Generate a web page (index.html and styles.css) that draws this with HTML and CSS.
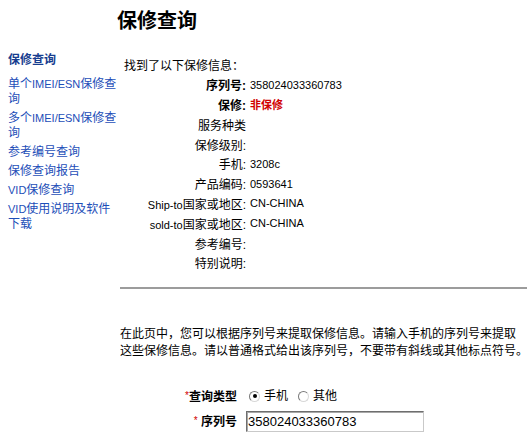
FILE: index.html
```html
<!DOCTYPE html>
<html lang="zh-CN">
<head>
<meta charset="utf-8">
<title>保修查询</title>
<link rel="stylesheet" href="styles.css">
</head>
<body>
<div class="page">
  <nav class="nav">
    <div class="nav-title">保修查询</div>
    <ul class="nav-list">
      <li><a href="#">单个<span class="en">IMEI/ESN</span>保修查询</a></li>
      <li><a href="#">多个<span class="en">IMEI/ESN</span>保修查询</a></li>
      <li><a href="#">参考编号查询</a></li>
      <li><a href="#">保修查询报告</a></li>
      <li><a href="#"><span class="en">VID</span>保修查询</a></li>
      <li><a href="#"><span class="en">VID</span>使用说明及软件下载</a></li>
    </ul>
  </nav>
  <main class="main">
    <h1 class="title">保修查询</h1>
    <div class="info">
      <div class="intro">找到了以下保修信息：</div>
      <div class="label bold">序列号:</div><div class="value en">358024033360783</div>
      <div class="label bold">保修:</div><div class="value"><span class="status">非保修</span></div>
      <div class="label">服务种类</div><div class="value"></div>
      <div class="label">保修级别:</div><div class="value"></div>
      <div class="label">手机:</div><div class="value en">3208c</div>
      <div class="label">产品编码:</div><div class="value en">0593641</div>
      <div class="label"><span class="en">Ship-to</span>国家或地区:</div><div class="value en">CN-CHINA</div>
      <div class="label"><span class="en">sold-to</span>国家或地区:</div><div class="value en">CN-CHINA</div>
      <div class="label">参考编号:</div><div class="value"></div>
      <div class="label">特别说明:</div><div class="value"></div>
    </div>
    <hr class="divider">
    <p class="desc">在此页中，您可以根据序列号来提取保修信息。请输入手机的序列号来提取<br>这些保修信息。请以普通格式给出该序列号，不要带有斜线或其他标点符号。</p>
    <form class="form">
      <div class="f-label"><span class="star">*</span>查询类型</div>
      <div class="f-control radios">
        <span class="opt"><span class="radio checked"></span>手机</span>
        <span class="opt"><span class="radio"></span>其他</span>
      </div>
      <div class="f-label"><span class="star">*</span>&nbsp;序列号</div>
      <div class="f-control"><input class="serial" type="text" value="358024033360783"></div>
    </form>
  </main>
</div>
</body>
</html>
```
FILE: styles.css
```css
html, body {
  margin: 0;
  padding: 0;
  background: #fff;
}
body {
  font-family: "Liberation Sans", "Noto Sans CJK SC", sans-serif;
  font-size: 12px;
  color: #000;
  overflow: hidden;
}
.en {
  font-size: 11px;
}
.page {
  display: flex;
  align-items: flex-start;
}
.nav {
  width: 110px;
  padding: 53px 2px 0 8px;
  flex: none;
}
.nav-title {
  font-weight: 700;
  color: #173d8f;
  line-height: 14px;
  font-size: 12px;
}
.nav-list {
  list-style: none;
  margin: 10px 0 0;
  padding: 0;
  display: flex;
  flex-direction: column;
  gap: 4px;
}
.nav-list li {
  line-height: 15px;
}
.nav-list a {
  color: #1d4eb8;
  text-decoration: none;
}
.main {
  flex: 1;
  min-width: 0;
}
.title {
  margin: 9px 0 22px -3px;
  font-size: 20px;
  line-height: 24px;
  font-weight: 700;
}
.info {
  display: grid;
  grid-template-columns: 122px 1fr;
  column-gap: 4px;
  padding-left: 4px;
  grid-auto-rows: 19.8px;
  align-items: center;
}
.intro {
  grid-column: 1 / -1;
}
.label {
  text-align: right;
  white-space: nowrap;
}
.bold {
  font-weight: 700;
}
.status {
  color: #d00000;
  font-weight: 700;
  font-size: 11px;
}
.divider {
  margin: 14px 0 0;
  border: 0;
  height: 0;
  border-top: 2px solid #9c9c9c;
}
.desc {
  margin: 37px 0 0;
  line-height: 17px;
  white-space: nowrap;
}
.form {
  display: grid;
  grid-template-columns: 117px auto;
  column-gap: 9px;
  row-gap: 4px;
  margin-top: 26px;
  align-items: center;
}
.f-label {
  text-align: right;
  font-weight: 700;
  line-height: 20px;
  white-space: nowrap;
}
.star {
  color: #d00000;
  font-weight: 400;
  font-size: 10px;
  vertical-align: 2px;
}
.radios {
  display: flex;
  align-items: center;
  line-height: 20px;
}
.opt {
  display: inline-flex;
  align-items: center;
  gap: 4px;
  margin-left: 3px;
  margin-right: 7px;
}
.radio {
  position: relative;
  width: 9px;
  height: 9px;
  border-radius: 50%;
  background: #fff;
  border: 1px solid;
  border-color: #7a7a7a #d8d8d8 #d8d8d8 #7a7a7a;
}
.radio.checked::after {
  content: "";
  position: absolute;
  left: 2.5px;
  top: 2.5px;
  width: 4px;
  height: 4px;
  border-radius: 50%;
  background: #000;
}
.serial {
  box-sizing: border-box;
  width: 178px;
  height: 21px;
  margin: 0;
  padding: 0 1px;
  font-family: "Liberation Sans", sans-serif;
  font-size: 13px;
  color: #000;
  background: #fff;
  border: 1px solid;
  border-color: #6e6e6e #c9c9c9 #c9c9c9 #6e6e6e;
  box-shadow: inset 1px 1px 0 #a8a8a8;
  outline: none;
}
```
